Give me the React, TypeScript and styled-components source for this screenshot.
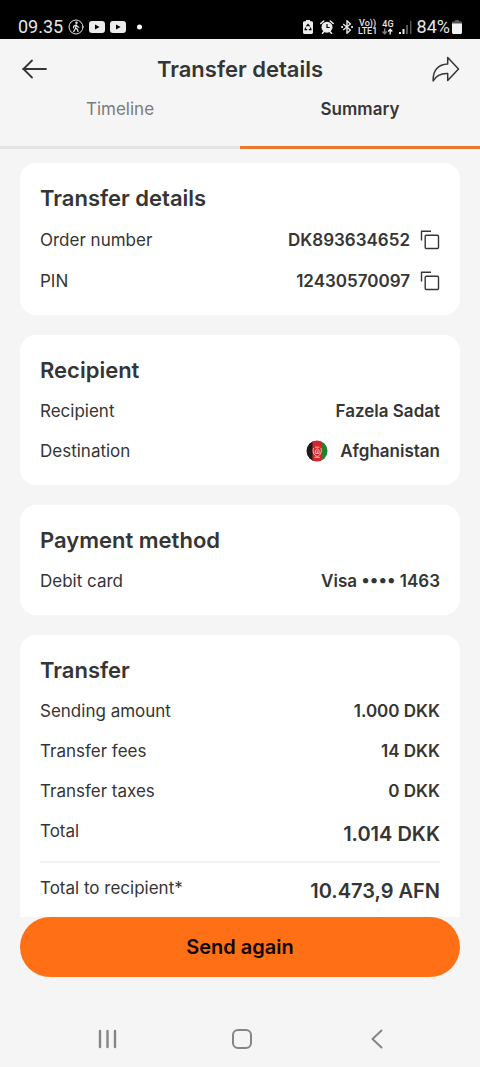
import React from 'react';
import styled, { createGlobalStyle } from 'styled-components';

const GlobalStyle = createGlobalStyle`
  *, *::before, *::after { box-sizing: border-box; }
  body {
    margin: 0;
    background: #f5f5f5;
    color: #353535;
    font-family: Inter, "Liberation Sans", sans-serif;
  }
  button { margin: 0; padding: 0; border: 0; background: none; color: inherit; font: inherit; cursor: pointer; }
  svg { display: block; flex: none; }
  h1, h2, dl, dt, dd { margin: 0; }
`;

const Screen = styled.div`
  display: flex;
  flex-direction: column;
  height: 100vh;
  background: #f5f5f5;
`;

const StatusBar = styled.div`
  display: flex;
  flex: none;
  align-items: center;
  justify-content: space-between;
  height: 39px;
  padding: 15px 18px 0;
  background: #000;
  color: #e6e6e6;
  font: 18px/22px Roboto, sans-serif;
`;

const StatusGroup = styled.div<{ $gap: number }>`
  display: flex;
  align-items: center;
  gap: ${({ $gap }) => $gap}px;
`;

const Battery = styled.div`
  display: flex;
  align-items: center;
  gap: 2px;
`;

const NetworkLabel = styled.span`
  display: flex;
  flex-direction: column;
  align-items: center;
  font: 500 9px/8px Roboto, sans-serif;
`;

const TopBar = styled.header`
  display: grid;
  flex: none;
  grid-template-columns: 32px 1fr 32px;
  align-items: center;
  height: 60px;
  padding: 0 18px;
`;

const Title = styled.h1`
  font-size: 22px;
  font-weight: 600;
  line-height: 30px;
  text-align: center;
`;

const IconButton = styled.button`
  display: flex;
  align-items: center;
  justify-content: center;
`;

const Tabs = styled.div`
  display: grid;
  flex: none;
  grid-template-columns: 1fr 1fr;
`;

const Tab = styled.button<{ $active?: boolean }>`
  height: 50px;
  padding-bottom: 27px;
  border-bottom: 3px solid ${({ $active }) => ($active ? '#e8792f' : '#e3e3e3')};
  color: ${({ $active }) => ($active ? '#353535' : '#7b7b7b')};
  font-size: 17px;
  font-weight: ${({ $active }) => ($active ? 600 : 400)};
  line-height: 20px;
`;

const Cards = styled.main`
  display: flex;
  flex: 1;
  flex-direction: column;
  gap: 20px;
  min-height: 0;
  padding: 14px 20px 20px;
  overflow-y: auto;
  scrollbar-width: none;
`;

const Card = styled.section`
  flex: none;
  padding: 20px 20px 24px;
  border-radius: 16px;
  background: #fff;
`;

const CardTitle = styled.h2`
  margin-bottom: 16px;
  font-size: 22px;
  font-weight: 600;
  line-height: 30px;
`;

const Details = styled.dl<{ $divided?: boolean }>`
  display: flex;
  flex-direction: column;
  gap: 20px;
  ${({ $divided }) => $divided && 'margin-top: 17px; padding: 15px 0 20px; border-top: 2px solid #f3f3f3;'}
`;

const Row = styled.div<{ $height: number }>`
  display: flex;
  align-items: flex-end;
  justify-content: space-between;
  height: ${({ $height }) => $height}px;
`;

const Label = styled.dt<{ $total?: boolean }>`
  align-self: ${({ $total }) => ($total ? 'flex-start' : 'flex-end')};
  font-size: 17px;
  line-height: 20px;
`;

const Value = styled.dd<{ $total?: boolean }>`
  display: flex;
  align-items: center;
  gap: 10px;
  font-size: ${({ $total }) => ($total ? 20 : 17)}px;
  font-weight: 600;
  line-height: 20px;
`;

const Country = styled.span`
  display: flex;
  align-items: center;
  gap: 12px;
  height: 20px;
`;

const Footer = styled.footer`
  flex: none;
  padding: 0 20px 30px;
`;

const SendButton = styled.button`
  width: 100%;
  height: 60px;
  border-radius: 30px;
  background: #ff6f16;
  color: #0d0500;
  font-size: 20px;
  font-weight: 600;
  line-height: 24px;
`;

const SystemNav = styled.nav`
  display: flex;
  flex: none;
  align-items: center;
  justify-content: space-between;
  height: 60px;
  padding: 3px 92px 0 96px;
  color: #858585;
`;

const WalkIcon = () => (
  <svg width="16" height="16" viewBox="0 0 16 16" fill="none" stroke="currentColor" strokeLinecap="round">
    <circle cx="8" cy="8" r="7" />
    <circle cx="8.5" cy="3.8" r="1.2" fill="currentColor" stroke="none" />
    <path d="M8.2 5.8 7.6 9l1.9 1.4.5 2.2M7.5 9.3 5.7 12.6M8 6 5.8 7.2l-.3 1.6M8.4 6.2l1 1.5 1.4.5" strokeWidth="1.2" />
  </svg>
);

const PlayIcon = () => (
  <svg width="16" height="12" viewBox="0 0 16 12">
    <rect width="16" height="12" rx="3" fill="#ececec" />
    <path d="m6 3.4 4.6 2.6L6 8.6z" fill="#000" />
  </svg>
);

const SaverIcon = () => (
  <svg width="10" height="14" viewBox="0 0 10 14">
    <path d="M3 0h4v1.3h1.6c.8 0 1.4.6 1.4 1.4v9.9c0 .8-.6 1.4-1.4 1.4H1.4C.6 14 0 13.4 0 12.6V2.7c0-.8.6-1.4 1.4-1.4H3z" fill="#ececec" />
    <path d="m3.4 6.3 1.6-2 1.6 2M7.3 7.5l.7 2.1H5.8M4.2 9.6H2l.8-2.1" fill="none" stroke="#000" strokeWidth="1.1" />
  </svg>
);

const AlarmIcon = () => (
  <svg width="14" height="14" viewBox="0 0 14 14">
    <path d="M.8 3.5 3.7 1M13.2 3.5 10.3 1M2.5 13.3l1.6-1.8M11.5 13.3l-1.6-1.8" stroke="#ececec" strokeWidth="1.6" strokeLinecap="round" />
    <circle cx="7" cy="7.2" r="5.5" fill="#ececec" />
    <path d="M7 4v3.5h2.7" fill="none" stroke="#000" strokeWidth="1.2" />
  </svg>
);

const BluetoothIcon = () => (
  <svg width="12" height="14" viewBox="1 0 12 14" fill="none" stroke="currentColor" strokeWidth="1.4">
    <path d="m3.2 4 7.2 6L7 13.2V.8L10.4 4 3.2 10" />
    <path d="M1.2 7h1.7M11.2 7h1.700" strokeWidth="1.8" />
  </svg>
);

const DataArrowsIcon = () => (
  <svg width="11" height="7" viewBox="0 0 11 7" fill="none" strokeWidth="1.4">
    <path d="M2.700 .5v5M.6 3.600l2.100 2.200 2.100-2.200" stroke="#858585" />
    <path d="M8.200 6.500V1.500M6.100 3.500l2.100-2.200 2.100 2.200" stroke="#ececec" />
  </svg>
);

const SignalIcon = () => (
  <svg width="13" height="13" viewBox="0 0 13 13">
    <path d="M0 11h2v2H0zM3.500 8h2v5h-2z" fill="#e6e6e6" />
    <path d="M7 4h2v9H7zM11 0h1.500v13H11z" fill="#555" />
  </svg>
);

const BatteryIcon = () => (
  <svg width="10" height="14" viewBox="0 0 10 14">
    <path d="M3 0h4v1.3h1.5c.8 0 1.5.6 1.5 1.5V4H0V2.8c0-.9.7-1.5 1.5-1.5H3z" fill="#555" />
    <path d="M0 3.5h10v9c0 .9-.6 1.5-1.5 1.5h-7C.6 14 0 13.4 0 12.5z" fill="#f2f2f2" />
  </svg>
);

const BackIcon = () => (
  <svg width="26" height="20" viewBox="0 0 26 20" fill="none" stroke="currentColor" strokeWidth="1.8" strokeLinecap="round" strokeLinejoin="round">
    <path d="M25 10H2M11 1.500 2.500 10l8.500 8.500" />
  </svg>
);

const ShareIcon = () => (
  <svg width="28" height="26" viewBox="0 0 28 26" fill="none" stroke="currentColor" strokeWidth="1.5" strokeLinejoin="round">
    <path d="M15.7 1.500 26.500 13 15.700 24.500v-6.900C8.500 17.300 4.200 19.600 1.200 25 .6 14.300 6.600 8.300 15.700 8z" />
  </svg>
);

const CopyIcon = () => (
  <svg width="20" height="20" viewBox="0 0 20 20" fill="none" stroke="currentColor" strokeWidth="1.4" strokeLinejoin="round">
    <rect x="5.200" y="5.200" width="13.300" height="13.300" rx="1" />
    <path d="M1.500 10.500V1.300H11" />
  </svg>
);

const FlagIcon = () => (
  <svg width="22" height="22" viewBox="0 0 22 22">
    <defs>
      <clipPath id="flag-disc"><circle cx="11" cy="11" r="10.500" /></clipPath>
    </defs>
    <g clipPath="url(#flag-disc)">
      <path d="M0 0h7v22H0z" fill="#1c1c1c" />
      <path d="M6.500 0H16v22H6.500z" fill="#d7262b" />
      <path d="M16 0h6v22h-6z" fill="#23802c" />
      <g fill="none" stroke="#f3b6b4" strokeWidth="1">
        <path d="M7.500 8c-1 3.500-.2 7 3.700 8.500 3.900-1.500 4.700-5 3.700-8.500" />
        <path d="M9.300 13.500v-3.200l1.900-1.600 1.900 1.600v3.200zM9 7.200h4.400M11.200 10.500v3" />
        <path d="M8.500 17.300h5.400" />
      </g>
    </g>
  </svg>
);

const RecentsIcon = () => (
  <svg width="22" height="20" viewBox="0 0 22 20" stroke="currentColor" strokeWidth="2.400" strokeLinecap="round">
    <path d="M4 2v16M11.500 2v16M19 2v16" />
  </svg>
);

const HomeIcon = () => (
  <svg width="22" height="22" viewBox="0 0 22 22" fill="none" stroke="currentColor" strokeWidth="2">
    <rect x="2" y="2" width="18" height="18" rx="5" />
  </svg>
);

const NavBackIcon = () => (
  <svg width="22" height="20" viewBox="0 0 22 20" fill="none" stroke="currentColor" strokeWidth="2" strokeLinecap="round" strokeLinejoin="round">
    <path d="M15.500 1.500 6.500 10l9 8.500" />
  </svg>
);

interface DetailProps {
  label: string;
  children: React.ReactNode;
  total?: boolean;
  height?: number;
}

const Detail = ({ label, children, total, height = 20 }: DetailProps) => (
  <Row $height={total ? 23 : height}>
    <Label $total={total}>{label}</Label>
    <Value $total={total}>{children}</Value>
  </Row>
);

const CopyDetail = ({ value, label }: { value: string; label: string }) => (
  <Detail label={label} height={21}>
    {value}
    <IconButton type="button" aria-label={`Copy ${label}`} onClick={() => navigator.clipboard?.writeText(value)}>
      <CopyIcon />
    </IconButton>
  </Detail>
);

export default function App() {
  return (
    <>
      <GlobalStyle />
      <Screen>
        <StatusBar>
          <StatusGroup $gap={5}>
            <span>09.35</span>
            <WalkIcon />
            <PlayIcon />
            <PlayIcon />
            <svg width="16" height="6" viewBox="0 0 16 6"><circle cx="8.5" cy="3" r="2.5" fill="#fff" /></svg>
          </StatusGroup>
          <StatusGroup $gap={5}>
            <StatusGroup $gap={7}>
              <SaverIcon />
              <AlarmIcon />
              <BluetoothIcon />
            </StatusGroup>
            <NetworkLabel><span>Vo))</span><span>LTE1</span></NetworkLabel>
            <NetworkLabel><span>4G</span><DataArrowsIcon /></NetworkLabel>
            <SignalIcon />
            <Battery><span>84%</span><BatteryIcon /></Battery>
          </StatusGroup>
        </StatusBar>

        <TopBar>
          <IconButton type="button" aria-label="Back"><BackIcon /></IconButton>
          <Title>Transfer details</Title>
          <IconButton type="button" aria-label="Share"><ShareIcon /></IconButton>
        </TopBar>

        <Tabs role="tablist">
          <Tab type="button" role="tab" aria-selected={false}>Timeline</Tab>
          <Tab type="button" role="tab" aria-selected $active>Summary</Tab>
        </Tabs>

        <Cards>
          <Card>
            <CardTitle>Transfer details</CardTitle>
            <Details>
              <CopyDetail label="Order number" value="DK893634652" />
              <CopyDetail label="PIN" value="12430570097" />
            </Details>
          </Card>

          <Card>
            <CardTitle>Recipient</CardTitle>
            <Details>
              <Detail label="Recipient">Fazela Sadat</Detail>
              <Detail label="Destination"><Country><FlagIcon />Afghanistan</Country></Detail>
            </Details>
          </Card>

          <Card>
            <CardTitle>Payment method</CardTitle>
            <Details>
              <Detail label="Debit card">Visa •••• 1463</Detail>
            </Details>
          </Card>

          <Card>
            <CardTitle>Transfer</CardTitle>
            <Details>
              <Detail label="Sending amount">1.000 DKK</Detail>
              <Detail label="Transfer fees">14 DKK</Detail>
              <Detail label="Transfer taxes">0 DKK</Detail>
              <Detail label="Total" total>1.014 DKK</Detail>
            </Details>
            <Details $divided>
              <Detail label="Total to recipient*" total>10.473,9 AFN</Detail>
            </Details>
          </Card>
        </Cards>

        <Footer>
          <SendButton type="button">Send again</SendButton>
        </Footer>

        <SystemNav aria-label="System">
          <IconButton type="button" aria-label="Recent apps"><RecentsIcon /></IconButton>
          <IconButton type="button" aria-label="Home"><HomeIcon /></IconButton>
          <IconButton type="button" aria-label="Go back"><NavBackIcon /></IconButton>
        </SystemNav>
      </Screen>
    </>
  );
}
